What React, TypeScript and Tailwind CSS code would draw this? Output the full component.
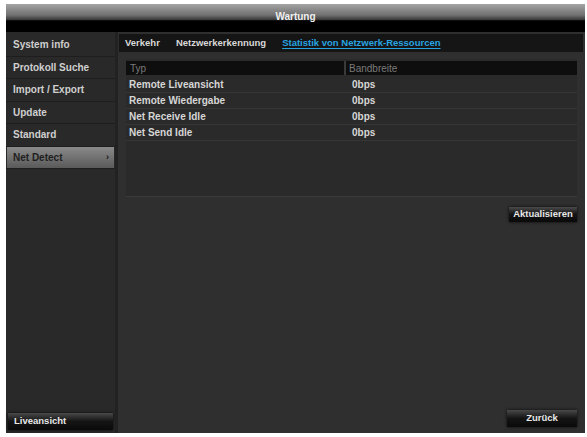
import React from 'react';

const menu = ['System info', 'Protokoll Suche', 'Import / Export', 'Update', 'Standard', 'Net Detect'];

const rows = [
    { typ: 'Remote Liveansicht', bw: '0bps' },
    { typ: 'Remote Wiedergabe', bw: '0bps' },
    { typ: 'Net Receive Idle', bw: '0bps' },
    { typ: 'Net Send Idle', bw: '0bps' },
];

const btn =
    'flex items-center justify-center text-[9.5px] font-bold text-[#e8e8e8] bg-gradient-to-b from-[#4a4a4a] via-[#141414] to-[#0a0a0a] shadow-[0_0_3px_rgba(0,0,0,0.8)]';

const App: React.FC = () => {
    return (
        <div
            className="w-[587px] h-[437px] bg-white pt-[4px] pl-[6px] pr-[2px] pb-[4px] overflow-hidden"
            style={{ fontFamily: '"Liberation Sans", Arial, sans-serif' }}
        >
            <div className="w-full h-full flex flex-col bg-[#2e2e2e]">
                {/* Title */}
                <div className="h-[28px] shrink-0 bg-[linear-gradient(to_bottom,#a4a4a4_0%,#707070_40%,#3a3a3a_56%,#000_60%,#000_100%)] flex justify-center">
                    <span className="text-[10px] font-bold text-[#f0f0f0] mt-[8px] leading-none">Wartung</span>
                </div>

                <div className="flex-1 flex min-h-0">
                    {/* Sidebar */}
                    <div className="w-[112px] shrink-0 bg-[#292929] flex flex-col border-r-[3px] border-[#222]">
                        <div className="pt-[2px] flex flex-col">
                            {menu.map((m, i) => {
                                const sel = i === menu.length - 1;
                                return (
                                    <div key={m} className="h-[22.5px] border-b border-[#1e1e1e] flex items-center px-[1px]">
                                        {sel ? (
                                            <div className="w-full h-[21px] bg-gradient-to-b from-[#8a8a8a] to-[#5a5a5a] flex items-center justify-between pl-[6px] pr-[5px]">
                                                <span className="text-[10px] font-bold text-[#1f1f1f]">{m}</span>
                                                <span className="text-[9px] font-bold text-[#1a1a1a]">›</span>
                                            </div>
                                        ) : (
                                            <span className="text-[10px] font-bold text-[#cfcfcf] pl-[6px]">{m}</span>
                                        )}
                                    </div>
                                );
                            })}
                        </div>
                        <div className="flex-1" />
                        <div className={`${btn} !justify-start h-[17px] mx-[2px] mb-[3px] pl-[6px] rounded-[1px]`}>
                            Liveansicht
                        </div>
                    </div>

                    {/* Main */}
                    <div className="flex-1 flex flex-col pt-[2px] pr-[2px] pl-[1px] bg-[#2f2f2f]">
                        <div className="h-[18px] bg-[#151515] flex items-center gap-[16px] pl-[6px] shrink-0 text-[9.5px] font-bold">
                            <span className="text-[#d8d8d8]">Verkehr</span>
                            <span className="text-[#d8d8d8]">Netzwerkerkennung</span>
                            <span className="text-[#27a3e0] underline underline-offset-[2px]">
                                Statistik von Netzwerk-Ressourcen
                            </span>
                        </div>

                        <div className="ml-[7px] mr-[6px] mt-[7px] h-[138px] bg-[#2a2a2a] border-b border-[#3a3a3a] pt-[2px] shrink-0">
                            <div className="h-[14px] flex bg-[#0e0e0e]">
                                <div className="w-[220px] border-r-[2px] border-[#3a3a3a] flex items-center pl-[4px] text-[10px] text-[#7a7a7a]">
                                    Typ
                                </div>
                                <div className="flex-1 flex items-center pl-[3px] text-[10px] text-[#7a7a7a]">Bandbreite</div>
                            </div>
                            <div className="pt-[2px]">
                                {rows.map(r => (
                                    <div key={r.typ} className="h-[16px] flex border-b border-[#353535]">
                                        <div className="w-[222px] flex items-center pl-[3px] text-[10px] font-bold text-[#d6d6d6]">
                                            {r.typ}
                                        </div>
                                        <div className="flex-1 flex items-center pl-[4px] text-[10px] font-bold text-[#d6d6d6]">
                                            {r.bw}
                                        </div>
                                    </div>
                                ))}
                            </div>
                        </div>

                        <div className="flex justify-end mr-[6px] mt-[10px]">
                            <div className={`${btn} w-[68px] h-[15px]`}>Aktualisieren</div>
                        </div>

                        <div className="flex-1" />
                        <div className="flex justify-end mr-[6px] mb-[6px]">
                            <div className={`${btn} w-[70px] h-[17px]`}>Zurück</div>
                        </div>
                    </div>
                </div>
            </div>
        </div>
    );
};

export default App;
